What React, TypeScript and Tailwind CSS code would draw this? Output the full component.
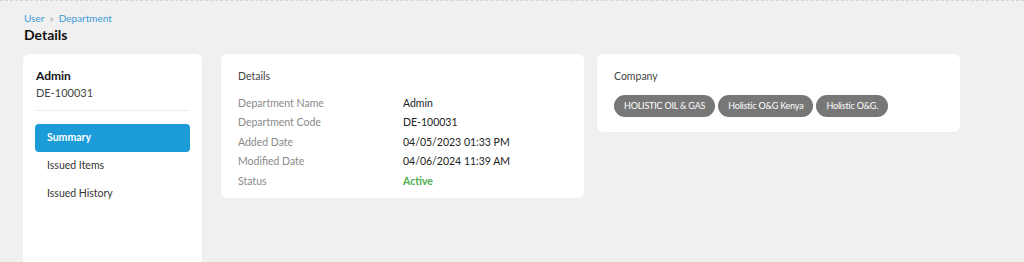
const rows = [
  { label: "Department Name", value: "Admin" },
  { label: "Department Code", value: "DE-100031" },
  { label: "Added Date", value: "04/05/2023 01:33 PM" },
  { label: "Modified Date", value: "04/06/2024 11:39 AM" },
];

const companies = ["HOLISTIC OIL & GAS", "Holistic O&G Kenya", "Holistic O&G."];

const menu = ["Summary", "Issued Items", "Issued History"];

export default function App() {
  return (
    <div
      className="h-[262px] overflow-hidden bg-[#f0f0f0] border-t border-dashed border-[#d4d4d4] text-[#222]"
      style={{ fontFamily: "Lato, 'Liberation Sans', sans-serif" }}
    >
      <div className="pl-6 pt-[10px]">
        <div className="flex items-center gap-[5px] text-[10px] leading-[14px] text-[#3b9bd6]">
          <span>User</span>
          <span className="text-[#aaa] text-[10px]">»</span>
          <span>Department</span>
        </div>
        <h1 className="mt-[1px] text-[14px] leading-[18px] font-bold text-[#111]">Details</h1>
      </div>

      <div className="flex items-start pl-[23px] mt-[10px]">
        <div className="w-[179px] h-[230px] bg-white rounded-[6px] px-3 pt-[14px] shrink-0">
          <div className="px-px text-[12px] leading-[16px] font-bold text-[#111]">Admin</div>
          <div className="px-px mt-[1px] text-[11px] leading-[15px] text-[#444]">DE-100031</div>
          <div className="mt-[10px] border-t border-[#ececec]" />
          <div className="mt-[13px] flex flex-col">
            {menu.map((m, i) => (
              <div
                key={m}
                className={
                  i === 0
                    ? "h-[28px] flex items-center px-3 rounded-[4px] bg-[#1b9bd8] text-white text-[10.5px] font-bold"
                    : "h-[28px] flex items-center px-3 text-[10.5px] text-[#333]"
                }
              >
                {m}
              </div>
            ))}
          </div>
        </div>

        <div className="ml-[19px] w-[363px] bg-white rounded-[6px] pl-[17px] pt-[15px] pb-[9px] shrink-0">
          <div className="text-[10.5px] leading-[15px] text-[#444]">Details</div>
          <div className="mt-[12px] flex flex-col gap-[4.5px]">
            {rows.map((r) => (
              <div key={r.label} className="flex items-center h-[15px] text-[10.5px]">
                <span className="w-[165px] text-[#8a8a8a]">{r.label}</span>
                <span className="text-[#222]">{r.value}</span>
              </div>
            ))}
            <div className="flex items-center h-[15px] text-[10.5px]">
              <span className="w-[165px] text-[#8a8a8a]">Status</span>
              <span className="text-[#4caf50] font-bold">Active</span>
            </div>
          </div>
        </div>

        <div className="ml-[13px] w-[363px] bg-white rounded-[6px] pl-[17px] pt-[15px] pb-[15px] shrink-0">
          <div className="text-[10.5px] leading-[15px] text-[#444]">Company</div>
          <div className="mt-[11px] flex gap-[3px]">
            {companies.map((c) => (
              <span
                key={c}
                className="h-[22px] px-[10px] flex items-center rounded-full bg-[#777] text-white text-[9px] tracking-[-0.2px]"
              >
                {c}
              </span>
            ))}
          </div>
        </div>
      </div>
    </div>
  );
}
